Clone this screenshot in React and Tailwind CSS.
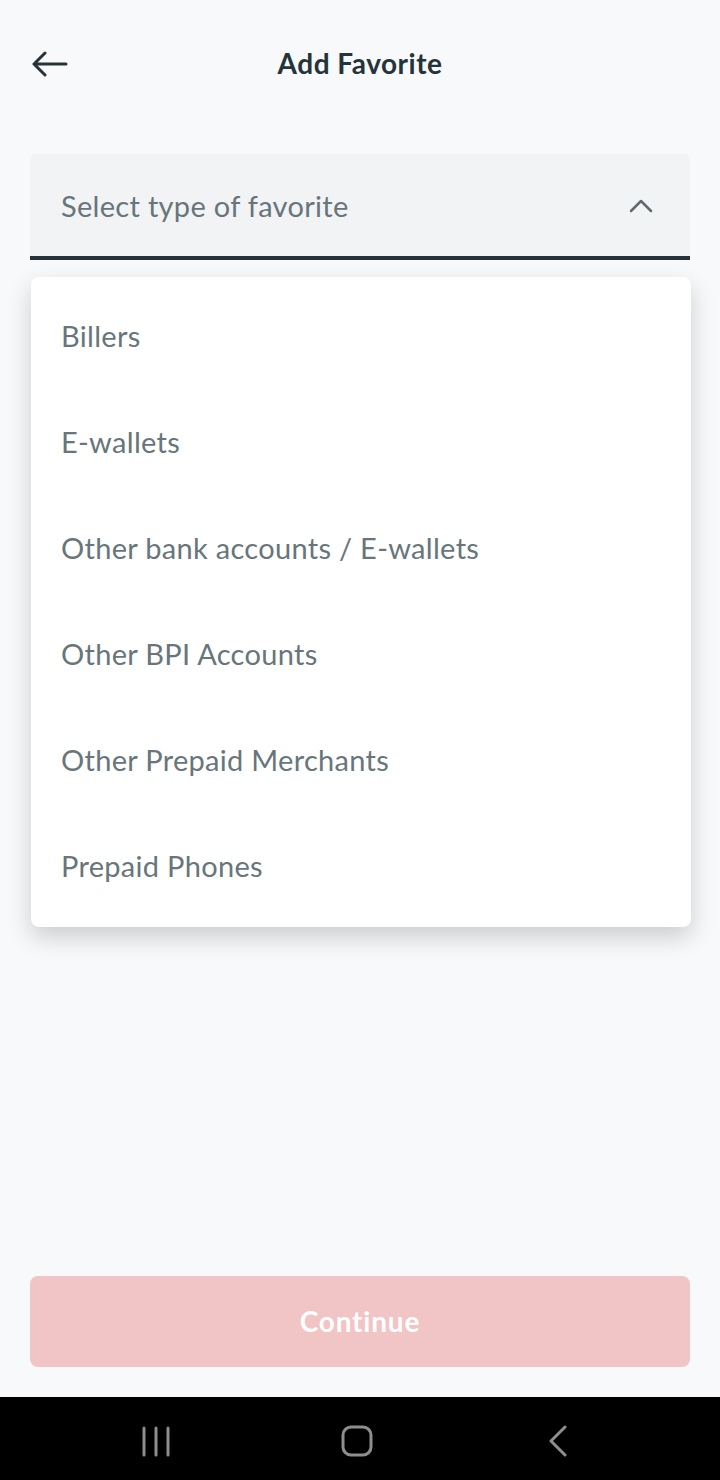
import React from "react";

const items = [
  "Billers",
  "E-wallets",
  "Other bank accounts / E-wallets",
  "Other BPI Accounts",
  "Other Prepaid Merchants",
  "Prepaid Phones",
];

export default function App() {
  return (
    <div
      className="w-[720px] h-[1480px] bg-[#f8f9fa] flex flex-col overflow-hidden"
      style={{ fontFamily: "Lato, 'Open Sans', sans-serif" }}
    >
      <div className="h-[126px] flex items-center relative px-[30px]">
        <svg width="38" height="26" viewBox="0 0 38 26" className="ml-[1px] mt-[1px]">
          <path d="M35 13H3M14 2L3 13l11 11" fill="none" stroke="#26343a" strokeWidth="3" strokeLinecap="round" strokeLinejoin="round" />
        </svg>
        <div className="absolute inset-x-0 text-center text-[28px] font-bold text-[#25343a] tracking-[0.5px]">
          Add Favorite
        </div>
      </div>
      <div className="px-[30px] mt-[28px]">
        <div className="h-[106px] bg-[#f1f3f5] rounded-t-[6px] border-b-[4px] border-[#263238] flex items-center justify-between pl-[31px] pr-[37px] pt-[2px]">
          <span className="text-[29px] tracking-[0.3px] text-[#68757b]">Select type of favorite</span>
          <svg width="24" height="14" viewBox="0 0 24 14">
            <path d="M2 12L12 2l10 10" fill="none" stroke="#5f6b71" strokeWidth="2.5" strokeLinecap="round" strokeLinejoin="round" />
          </svg>
        </div>
      </div>
      <div className="px-[31px] pr-[29px] mt-[17px]">
        <div className="bg-white rounded-[8px] pt-[6px] pb-[8px] shadow-[0_10px_24px_rgba(0,0,0,0.18)]">
          {items.map((t) => (
            <div key={t} className="h-[106px] flex items-center pl-[30px] text-[29px] tracking-[0.3px] text-[#68757b]">
              {t}
            </div>
          ))}
        </div>
      </div>
      <div className="flex-1" />
      <div className="px-[30px] pb-[30px]">
        <div className="h-[91px] rounded-[8px] bg-[#f1c4c5] flex items-center justify-center text-white text-[28px] font-bold tracking-[0.8px] pb-[2px]">
          Continue
        </div>
      </div>
      <div className="h-[83px] bg-black flex items-center pl-[126px] gap-[141px] pt-[4px]">
        <div className="w-[60px] flex justify-center">
          <svg width="30" height="32" viewBox="0 0 30 32">
            <path d="M3 3v27M15 3v27M27 3v27" stroke="#8e8e8e" strokeWidth="3" strokeLinecap="round" />
          </svg>
        </div>
        <div className="w-[60px] flex justify-center">
          <svg width="32" height="32" viewBox="0 0 32 32">
            <rect x="2" y="2" width="28" height="28" rx="8" fill="none" stroke="#8e8e8e" strokeWidth="3" />
          </svg>
        </div>
        <div className="w-[60px] flex justify-center">
          <svg width="22" height="32" viewBox="0 0 22 32">
            <path d="M18 2L4 16l14 14" fill="none" stroke="#8e8e8e" strokeWidth="3" strokeLinecap="round" strokeLinejoin="round" />
          </svg>
        </div>
      </div>
    </div>
  );
}
